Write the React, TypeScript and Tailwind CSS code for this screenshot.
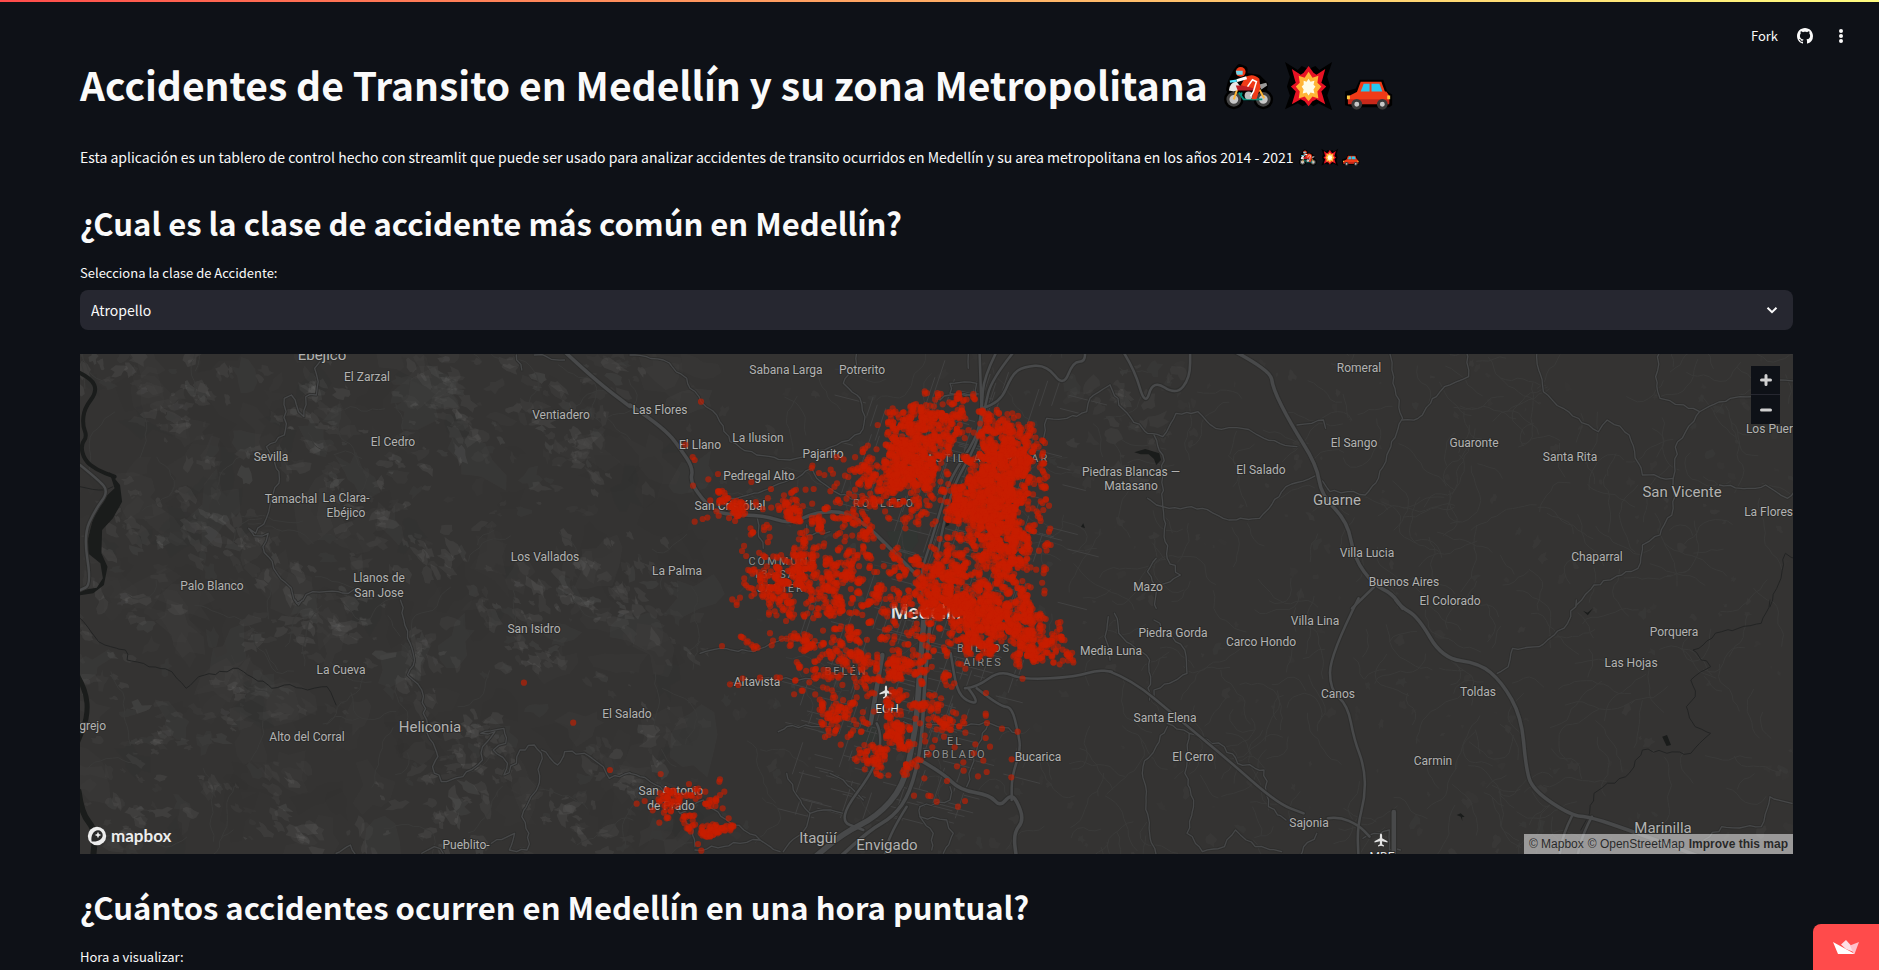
import { useId } from "react";

type Point = [number, number];
type Tile = { x: number; y: number; sx: number; sy: number };

const third = 1 / 3;
const TILES = {
  nw: { x: -10, y: -9, sx: 1 / 2.8, sy: third },
  sw: { x: -10, y: 246, sx: 1 / 2.8, sy: third },
  n: { x: 550, y: -9, sx: third, sy: third },
  s: { x: 550, y: 246, sx: third, sy: third },
  ne: { x: 1030, y: -9, sx: 0.44, sy: third },
  se: { x: 1030, y: 246, sx: 0.44, sy: third },
} satisfies Record<string, Tile>;
type TileName = keyof typeof TILES;

/** Seeded generator, so that the map draws the same on each render. */
function makeRandom(seed: number) {
  let state = seed;
  return () => {
    state = (state + 0x6d2b79f5) | 0;
    let t = Math.imul(state ^ (state >>> 15), 1 | state);
    t = (t + Math.imul(t ^ (t >>> 7), 61 | t)) ^ t;
    return ((t ^ (t >>> 14)) >>> 0) / 4294967296;
  };
}

function parse(tile: TileName, text: string): Point[] {
  const t = TILES[tile];
  return text.split(" ").map((pair) => {
    const [a, b] = pair.split(",").map(Number);
    return [t.x + a * t.sx, t.y + b * t.sy];
  });
}

function toPath(points: Point[], close = false) {
  const body = points.map(([x, y]) => `${x.toFixed(1)} ${y.toFixed(1)}`).join("L");
  return `M${body}${close ? "Z" : ""}`;
}

function smooth(points: Point[]) {
  let d = `M${points[0][0].toFixed(1)} ${points[0][1].toFixed(1)}`;
  for (let i = 1; i < points.length - 1; i++) {
    const [x, y] = points[i];
    const mx = (x + points[i + 1][0]) / 2;
    const my = (y + points[i + 1][1]) / 2;
    d += `Q${x.toFixed(1)} ${y.toFixed(1)} ${mx.toFixed(1)} ${my.toFixed(1)}`;
  }
  const last = points[points.length - 1];
  return `${d}L${last[0].toFixed(1)} ${last[1].toFixed(1)}`;
}

function wiggle(points: Point[], random: () => number) {
  const out: Point[] = [points[0]];
  for (let i = 1; i < points.length; i++) {
    const [ax, ay] = points[i - 1];
    const [bx, by] = points[i];
    const steps = Math.max(1, Math.round(Math.hypot(bx - ax, by - ay) / 6));
    for (let s = 1; s <= steps; s++) {
      const f = s / steps;
      const j = s === steps ? 0 : 3.4;
      out.push([ax + (bx - ax) * f + (random() - 0.5) * j, ay + (by - ay) * f + (random() - 0.5) * j]);
    }
  }
  return out;
}

const HIGHWAYS: [TileName, number, string][] = [
  ["nw", 3, "28,360 80,405 108,440 70,495 38,570 60,720 28,735"],
  ["nw", 4, "1385,20 1470,105 1568,185"],
  ["n", 4, "0,180 60,220 120,270 150,310 190,370 180,410 230,480 280,510 400,510 480,538 560,500 650,500 720,550 800,630 870,700"],
  ["n", 3, "1048,0 1052,130 1055,200 1040,280 960,400 930,500 900,600 870,690 880,800"],
  ["n", 3, "1110,0 1062,90 1055,190"],
  ["n", 3, "1160,10 1085,100 1064,190 1040,300 970,420 940,540 920,640"],
  ["n", 3, "1060,188 1110,175 1145,90 1180,65 1250,60 1300,125 1330,50 1365,50 1365,10"],
  ["ne", 3, "25,10 55,70 80,185 98,105 150,150 182,100 182,10"],
  ["ne", 4, "270,10 365,75 370,130 410,235 470,360 480,450 540,530 555,640 600,720 640,745 665,790"],
  ["se", 4, "650,0 660,20 700,50 755,175 840,190 890,245 935,350 945,500 960,570 1050,648 1090,650 1200,700 1350,775"],
  ["ne", 3, "600,726 550,790"],
  ["se", 3, "565,-5 500,165 500,270 540,315 555,420 578,500 580,590 562,680 565,780"],
  ["se", 3, "0,215 50,240 150,350 260,470 380,610 440,640"],
  ["se", 3, "495,655 520,650 565,675 590,710"],
  ["s", 3, "1005,265 1040,262 1110,210 1180,240 1340,230 1400,210 1445,215"],
  ["s", 6, "885,20 870,200 860,350 850,420 820,560 740,650 640,700 550,775"],
  ["s", 4, "905,20 885,220 875,440 840,580 790,650 720,690 620,780"],
  ["s", 5, "757,165 722,370"],
  ["s", 4, "870,480 940,520 990,570 1080,585 1110,620 1140,585 1160,600 1182,660 1150,700 1160,780"],
  ["s", 3, "1015,265 1050,310 1010,305 980,270 962,160"],
  ["s", 3, "1040,265 1110,320 1145,320 1165,400 1172,450 1145,530 1145,600"],
  ["s", 3, "740,370 756,400 740,500 620,660 700,690"],
  ["s", 3, "830,620 780,700 760,780"],
  ["se", 3, "1050,648 1030,700 1020,780"],
  ["se", 3, "1095,650 1075,700 1060,780"],
  ["se", 5, "645,636 645,762"],
];

const ROADS: [TileName, string][] = [
  ["nw", "700,50 685,70 695,110 690,150 660,155 655,215 640,200 620,150 600,160 605,200 600,270 550,305 585,380 585,415 570,440 550,520 520,565 500,550 515,572 555,565 540,605 570,670 620,730 635,775 680,740 780,745 800,730"],
  ["nw", "1250,30 1265,75"],
  ["nw", "1300,30 1385,45"],
  ["n", "0,30 100,45 170,100 180,130 213,170 260,210 300,290 380,330 480,345 545,320 620,300 690,265 705,215 690,160 640,115 680,60 680,20"],
  ["n", "545,370 500,400 420,430 300,460"],
  ["n", "545,370 560,400 600,430 660,460 700,480"],
  ["n", "380,510 385,560 400,610"],
  ["n", "530,540 530,570 600,560"],
  ["n", "930,165 960,150 1060,150"],
  ["n", "960,115 1040,115 1040,150 960,145 960,115"],
  ["n", "1015,27 1015,70"],
  ["n", "1240,300 1250,220 1310,220 1370,200 1380,160 1440,120"],
  ["ne", "0,120 20,180 85,265 120,275 150,205 200,200 240,250 300,250 350,280 425,305"],
  ["ne", "490,250 485,225 425,240"],
  ["ne", "635,20 650,150 665,220 640,290 610,400 580,450 540,440 500,440 475,400"],
  ["ne", "665,225 700,220 760,125 815,95 810,20"],
  ["ne", "970,20 985,140 1030,190 1110,260 1130,225 1180,270 1210,390 1280,400 1280,490 1250,570 1210,600 1200,670 1100,720 1060,780"],
  ["se", "1060,0 1040,70 975,140 915,145 905,200 880,220"],
  ["ne", "1250,20 1240,95 1250,160 1340,200 1410,160 1460,155"],
  ["ne", "1340,200 1290,290 1280,400"],
  ["ne", "1520,105 1555,108"],
  ["ne", "1385,420 1450,430 1490,420 1540,460 1555,440"],
  ["ne", "470,390 400,425 340,520 270,525 210,490 120,485 130,640 160,690 105,725 105,790"],
  ["ne", "85,460 120,485 120,330 100,270"],
  ["ne", "105,640 85,680 105,725"],
  ["se", "130,380 75,500 90,700 105,765"],
  ["se", "180,400 170,520 190,600 175,700 210,755 260,740 285,690 330,740 390,755"],
  ["se", "130,370 180,400 260,440 290,490 350,510 360,620 400,660"],
  ["se", "100,60 170,150 175,220 100,270 100,300"],
  ["se", "10,40 20,100 90,180 90,300"],
  ["se", "470,700 440,740 430,770"],
  ["se", "1550,610 1500,590 1480,680 1390,680 1350,720"],
  ["se", "575,715 600,700 635,690 635,750 660,750"],
  ["sw", "925,0 935,60 965,180 945,225 985,270 1000,400 1030,470 1015,500 1040,545 1100,530 1155,480 1155,440 1190,395 1150,400 1215,385 1220,430 1185,450 1225,490 1215,525 1250,490 1260,450 1300,435 1320,460 1310,560 1265,650 1285,700 1280,750 1230,750 1245,700 1180,730"],
  ["sw", "1320,450 1365,495 1385,455 1440,460 1480,490 1510,535 1568,518"],
  ["sw", "745,760 785,735 800,765"],
  ["sw", "985,760 1020,740 1045,760"],
  ["sw", "630,0 640,15 650,0"],
  ["s", "210,160 270,145 370,155 460,115 580,130"],
  ["s", "300,250 400,235 560,240"],
  ["s", "445,395 470,380 600,380"],
  ["s", "470,520 490,570 540,640 530,680 460,755"],
  ["s", "540,640 580,630 640,640"],
  ["s", "0,520 30,530 90,560 150,640 190,690 195,740"],
  ["s", "150,640 220,600 290,660 390,720 450,755"],
  ["s", "195,750 330,730 390,720"],
  ["s", "600,520 640,540 700,600"],
  ["s", "870,620 870,650 950,660 970,700 940,760"],
  ["s", "870,650 910,700 905,750"],
  ["s", "870,620 960,600 960,560"],
  ["s", "820,365 900,375 1080,370 1165,400"],
  ["s", "1075,370 1040,450 1010,560"],
  ["s", "1435,50 1425,110 1440,180"],
];

const STREAMS: [TileName, string][] = [
  ["sw", "28,55 80,125 155,150 160,180 285,215 325,265 360,230 470,205 565,265 600,255 665,270 720,260 745,315"],
  ["se", "1500,0 1480,70 1390,95 1325,150 1365,200 1320,240 1330,290 1310,320 1330,380 1365,400 1340,430 1320,460 1210,450 1180,520 1100,580 1090,640 1070,690"],
  ["ne", "1555,640 1535,625 1525,700 1500,785"],
  ["nw", "28,425 80,435 120,425"],
];

const RIVERS: [TileName, number, string][] = [
  ["nw", 4, "20,80 60,100 76,140 40,190 35,240 48,275 30,300 40,345 75,375 125,395"],
  ["sw", 5, "20,225 45,270 50,350 20,430"],
  ["sw", 6, "24,575 32,640 72,690 64,780"],
  ["n", 3, "1050,200 1055,260 1035,310 990,350"],
];

const WATER: [TileName, string][] = [
  ["nw", "110,380 140,420 146,470 120,520 90,555 88,625 105,665 95,720 65,745 20,752 20,738 75,728 92,700 85,655 50,625 48,590 65,520 100,455 125,430"],
  ["ne", "55,322 80,312 112,325 116,345 105,360 100,342 88,328 70,328"],
  ["se", "1075,32 1085,38 1098,25 1086,46"],
  ["se", "1255,410 1266,405 1275,435 1265,438"],
  ["se", "788,645 797,640 806,650 800,652 801,663 797,650"],
  ["n", "938,530 955,522 958,540 945,546"],
  ["n", "1353,545 1360,535 1365,550"],
];

const PARKS: [TileName, string][] = [
  ["n", "770,560 860,548 865,590 830,640 790,610"],
  ["s", "655,385 700,368 748,385 752,405 720,430 670,420"],
  ["n", "735,665 780,660 775,700 740,705"],
];

/** Accidents by 16 px cell: row, first column, and one digit a cell from 0 (empty) to 9 (solid). */
const DENSITY: [number, number, string][] = [
  [3, 16, "003353"],
  [4, 16, "578763641"],
  [5, 16, "6877527862"],
  [6, 14, "318976208985"],
  [7, 11, "112657994069894"],
  [8, 12, "10659882388975"],
  [9, 5, "400144132465444899973"],
  [10, 4, "1152245135422444999933"],
  [11, 7, "33024246202303689621"],
  [12, 7, "22053244120244688831"],
  [13, 7, "1357655444536657861"],
  [14, 7, "4577466424477846623"],
  [15, 6, "13663575364578877562"],
  [16, 8, "363455543478998882"],
  [17, 9, "101343233346998863"],
  [18, 7, "312444553335258746762"],
  [19, 10, "334663655324415645"],
  [20, 11, "44355744400002"],
  [21, 10, "11114141311"],
  [22, 12, "55216452"],
  [23, 12, "54306224301"],
  [24, 12, "332084111"],
  [25, 14, "55211"],
  [26, 14, "1415"],
];
const DENSITY_COUNTS = [0, 1, 2, 5, 9, 14, 24, 36, 50, 68];

const SINGLES: [TileName, string][] = [
  ["n", "213,170 743,240 166,299 188,336 194,345 264,387 235,403 189,422 364,411 194,530 218,522 266,512 545,369 567,384 583,390 602,374 609,386 621,415 645,392 660,376 655,396 1211,257 1243,354 1241,685 1240,495 1257,482 1257,560 1262,600 1232,528 423,432 320,772 330,758 551,432 788,190 790,202 850,188 862,185 875,186 888,180 900,182 912,184 938,178 958,172 965,178"],
  ["s", "276,138 320,15 300,253 338,235 325,255 390,233 440,232 450,233 495,242 497,241 515,272 518,272 538,247 556,236 579,262 606,271 883,535 951,543 852,587 895,587 902,588 920,605 1005,603 984,620 1145,478 1144,532 1163,395 1116,386 1068,279 1067,341 1071,369 1067,414 1080,440 1060,482 1070,516 1044,529 1003,370 1036,433 1032,460 1000,487 981,499 1001,512 974,442 942,410 915,420 907,442 896,463 884,407 855,483 870,370 895,357 920,388 1006,206 965,260 914,285 933,295 578,343 596,405 92,522 270,538 268,545 177,552 226,575 283,575 270,585 20,611 44,603 68,631 88,668 204,732 214,752 278,625 296,655 370,140 378,138 372,146 364,134 383,143 429,122 425,136 455,116 470,116 505,116"],
  ["sw", "1271,248 1409,368 1512,510"],
];

const CLUSTERS: [TileName, number, number, number, number, number][] = [
  ["s", 120, 595, 38, 28, 40],
  ["s", 190, 580, 25, 18, 10],
  ["s", 240, 605, 30, 16, 14],
  ["s", 115, 635, 14, 22, 7],
  ["s", 180, 670, 30, 28, 20],
  ["s", 240, 692, 30, 22, 40],
  ["s", 293, 685, 20, 14, 14],
  ["s", 528, 135, 22, 24, 22],
  ["s", 915, 322, 18, 12, 8],
  ["s", 960, 372, 34, 20, 16],
  ["s", 625, 340, 34, 26, 24],
  ["s", 795, 395, 28, 30, 26],
  ["s", 735, 465, 30, 34, 22],
  ["s", 805, 205, 38, 30, 34],
  ["s", 1215, 150, 50, 22, 20],
  ["n", 325, 490, 28, 24, 26],
  ["n", 273, 452, 14, 26, 12],
  ["n", 490, 505, 22, 22, 22],
  ["n", 555, 530, 22, 14, 14],
];

type Label = [string, number, number, number?, ("start" | "end")?];
const PLACES: Label[] = [
  ["Ebéjico", 242, 1, 15], ["El Zarzal", 287, 23], ["Sevilla", 191, 103], ["El Cedro", 313, 88],
  ["Ventiadero", 481, 61], ["Tamachal", 211, 145], ["La Clara-", 266, 144], ["Ebéjico", 266, 159],
  ["Los Vallados", 465, 203], ["Palo Blanco", 132, 232], ["Llanos de", 299, 224], ["San Jose", 299, 239],
  ["San Isidro", 454, 275], ["La Cueva", 261, 316], ["Alto del Corral", 227, 383], ["Heliconia", 350, 373, 15],
  ["grejo", 26, 372, 12, "end"], ["El Salado", 547, 360], ["Pueblito-", 386, 491], ["Sabana Larga", 706, 16],
  ["Potrerito", 782, 16], ["Las Flores", 580, 56], ["El Llano", 620, 91], ["La Ilusion", 678, 84],
  ["Pajarito", 743, 100], ["Pedregal Alto", 679, 122], ["San Cristóbal", 650, 152], ["La Palma", 597, 217],
  ["Altavista", 677, 328], ["San Antonio", 591, 437], ["de Prado", 591, 452], ["Itagüí", 738, 484, 15],
  ["Envigado", 807, 491, 15], ["Bucarica", 958, 403], ["Media Luna", 1031, 297], ["Piedras Blancas —", 1051, 118],
  ["Matasano", 1051, 132], ["El Salado", 1181, 116], ["Guarne", 1257, 146, 15], ["Romeral", 1279, 14],
  ["El Sango", 1274, 89], ["Guaronte", 1394, 89], ["Santa Rita", 1490, 103], ["San Vicente", 1602, 138, 15],
  ["Los Puer", 1713, 75, 12, "end"], ["La Flores", 1713, 158, 12, "end"], ["Villa Lucia", 1287, 199],
  ["Buenos Aires", 1324, 228], ["El Colorado", 1370, 247], ["Chaparral", 1517, 203], ["Mazo", 1068, 233],
  ["Villa Lina", 1235, 267], ["Piedra Gorda", 1093, 279], ["Carco Hondo", 1181, 288], ["Porquera", 1594, 278],
  ["Las Hojas", 1551, 309], ["Canos", 1258, 340], ["Toldas", 1398, 338], ["Santa Elena", 1085, 364],
  ["El Cerro", 1113, 403], ["Carmin", 1353, 407], ["Sajonia", 1229, 469], ["Marinilla", 1583, 474, 15],
];

const DISTRICTS: Label[] = [
  ["COMMUNE", 703, 207], ["13- SAN", 700, 220], ["JAVIER", 701, 234], ["ROBLEDO", 804, 149],
  ["CASTILLA", 870, 104], ["POPULAR", 938, 104], ["BUENOS", 904, 294], ["AIRES", 903, 308],
  ["BELÉN", 766, 317], ["EL", 875, 387], ["POBLADO", 875, 400],
];

function buildTerrain() {
  const random = makeRandom(11);
  const patches: { d: string; fill: string; o: number }[] = [];
  const blob = (x: number, y: number, size: number, angle: number, flat: number) => {
    const points: Point[] = [];
    for (let k = 0; k < 11; k++) {
      const a = (k / 11) * Math.PI * 2;
      const r = size * (0.35 + random() * 0.75);
      const px = Math.cos(a) * r;
      const py = Math.sin(a) * r * flat;
      points.push([x + px * Math.cos(angle) - py * Math.sin(angle), y + px * Math.sin(angle) + py * Math.cos(angle)]);
    }
    return toPath(points, true);
  };
  for (let i = 0; i < 220; i++) {
    const d = blob(random() * 620, random() * 500, 10 + random() * 34, random() * 3, 0.6);
    patches.push({ d, fill: random() < 0.4 ? "#000" : "#fff", o: 0.008 + random() * 0.014 });
  }
  for (let group = 0; group < 150; group++) {
    const gx = random() * 600;
    const gy = random() * 500;
    const lean = 0.5 + (random() - 0.5) * 1.6;
    for (let i = 0; i < 6; i++) {
      const d = blob(gx + (random() - 0.5) * 60, gy + (random() - 0.5) * 44, 3 + random() * 12, lean + (random() - 0.5) * 0.8, 0.55);
      patches.push({ d, fill: "#fff", o: 0.015 + random() * 0.045 });
    }
  }
  for (let i = 0; i < 360; i++) {
    const d = blob(600 + random() * 1113, random() * 500, 2 + random() * 7, random() * 3, 0.7);
    patches.push({ d, fill: "#fff", o: 0.008 + random() * 0.022 });
  }
  for (let i = 0; i < 40; i++) {
    const d = blob(985 + random() * 130, random() * 130, 3 + random() * 11, random() * 3, 0.7);
    patches.push({ d, fill: "#fff", o: 0.015 + random() * 0.03 });
  }
  return patches;
}

function buildTracks() {
  const random = makeRandom(29);
  let d = "";
  for (let i = 0; i < 420; i++) {
    const east = random() < 0.72;
    let x = east ? 960 + random() * 753 : random() * 960;
    let y = random() * 500;
    let a = random() * Math.PI * 2;
    const points: Point[] = [[x, y]];
    const steps = 4 + Math.floor(random() * 10);
    for (let s = 0; s < steps; s++) {
      a += (random() - 0.5) * 1.3;
      x += Math.cos(a) * 6;
      y += Math.sin(a) * 6;
      points.push([x, y]);
    }
    d += toPath(points);
  }
  return d;
}

function buildStreets() {
  const random = makeRandom(5);
  let d = "";
  for (let i = 0; i < 330; i++) {
    const y = 30 + random() * 440;
    const middle = y < 260 ? 870 : 830 - (y - 260) * 0.15;
    const x = middle + (random() + random() - 1) * 130;
    const along = random() < 0.5;
    const a = along ? -1.25 : 0.25;
    const l = 10 + random() * 30;
    d += toPath([[x, y], [x + Math.cos(a) * l, y + Math.sin(a) * l]]);
  }
  return d;
}

function buildAccidents() {
  const random = makeRandom(77);
  const out: Point[] = [];
  DENSITY.forEach(([r, first, digits]) => {
    digits.split("").forEach((digit, k) => {
      const count = DENSITY_COUNTS[Number(digit)];
      let x = 0;
      let y = 0;
      for (let i = 0; i < count; i++) {
        if (i === 0 || random() < 0.4) {
          x = 550 + (first + k + random()) * 16;
          y = -9 + (r + random()) * 16;
        } else {
          x += (random() - 0.5) * 6;
          y += (random() - 0.5) * 6;
        }
        out.push([x, y]);
      }
    });
  });
  CLUSTERS.forEach(([tile, cx, cy, rx, ry, count]) => {
    for (let i = 0; i < count; i++) {
      const a = random() * Math.PI * 2;
      const r = Math.sqrt(random());
      out.push(...parse(tile, `${cx + Math.cos(a) * r * rx},${cy + Math.sin(a) * r * ry}`));
    }
  });
  SINGLES.forEach(([tile, text]) => out.push(...parse(tile, text)));
  return out;
}

const roadRandom = makeRandom(3);
const TERRAIN = buildTerrain();
const TRACKS = buildTracks();
const STREETS = buildStreets();
const ACCIDENTS = buildAccidents();
const ROAD_PATHS = ROADS.map(([tile, text]) => toPath(wiggle(parse(tile, text), roadRandom)));
const STREAM_PATHS = STREAMS.map(([tile, text]) => toPath(wiggle(parse(tile, text), roadRandom)));

function Plane({ x, y }: { x: number; y: number }) {
  return (
    <path
      transform={`translate(${x} ${y})`}
      fill="#e4e4e4"
      d="M0-6.5C.8-6.5 1.1-5.4 1.1-4.4V-1.8L6.5 1.2V2.6L1.1 1.2V4.2L3 5.6V6.5L0 5.8-3 6.5V5.6L-1.1 4.2V1.2L-6.5 2.6V1.2L-1.1-1.8V-4.4C-1.1-5.4-.8-6.5 0-6.5Z"
    />
  );
}

function MapCanvas() {
  return (
    <svg
      viewBox="0 0 1713 500"
      preserveAspectRatio="xMidYMid slice"
      role="img"
      aria-label="Mapa de accidentes"
      className="block h-full w-full bg-[#343332] font-['Roboto',sans-serif]"
    >
      <rect width="1713" height="500" fill="#343332" />
      {TERRAIN.map((p, i) => (
        <path key={i} d={p.d} fill={p.fill} fillOpacity={p.o} />
      ))}
      {PARKS.map(([tile, text]) => (
        <path key={text} d={toPath(parse(tile, text), true)} fill="#313532" />
      ))}
      <g fill="none" strokeLinejoin="round" strokeLinecap="round">
        <path d={TRACKS} stroke="#3a3a39" strokeWidth="1" />
        <path d={STREETS} stroke="#424242" strokeWidth="1" />
        {RIVERS.map(([tile, width, text]) => (
          <path key={text} d={smooth(parse(tile, text))} stroke="#1a1c1b" strokeWidth={width} />
        ))}
        {WATER.map(([tile, text]) => (
          <path key={text} d={toPath(parse(tile, text), true)} fill="#1a1c1b" />
        ))}
        {STREAM_PATHS.map((d) => (
          <path key={d} d={d} stroke="#232424" strokeWidth="1" />
        ))}
        {ROAD_PATHS.map((d) => (
          <path key={d} d={d} stroke="#2e2e2d" strokeWidth="3" />
        ))}
        {ROAD_PATHS.map((d) => (
          <path key={d} d={d} stroke="#464748" strokeWidth="1.3" />
        ))}
        {HIGHWAYS.map(([tile, width, text]) => (
          <path key={text} d={smooth(parse(tile, text))} stroke="#2e2e2d" strokeWidth={width + 1.5} />
        ))}
        {HIGHWAYS.map(([tile, width, text]) => (
          <path key={text} d={smooth(parse(tile, text))} stroke="#48494a" strokeWidth={width - 0.5} />
        ))}
      </g>
      <g stroke="#2b2b2a" strokeWidth="2" strokeLinejoin="round" className="[paint-order:stroke]">
        {PLACES.map(([name, x, y, size = 12, anchor = "middle"]) => (
          <text key={`${name}${x}${y}`} x={x} y={y} fontSize={size} textAnchor={anchor} dominantBaseline="central" fill="#b2b2b1">
            {name}
          </text>
        ))}
        {DISTRICTS.map(([name, x, y]) => (
          <text key={`${name}${y}`} x={x} y={y} fontSize="11" textAnchor="middle" dominantBaseline="central" fill="#8d8e8e" className="tracking-[2px]">
            {name}
          </text>
        ))}
        <text x="849" y="258" fontSize="20" fontWeight="500" textAnchor="middle" dominantBaseline="central" fill="#e2e2e2">
          Medellín
        </text>
        <text x="807" y="355" fontSize="12" textAnchor="middle" dominantBaseline="central" fill="#e2e2e2">
          EOH
        </text>
        <text x="1302" y="503" fontSize="12" textAnchor="middle" dominantBaseline="central" fill="#e2e2e2">
          MDE
        </text>
      </g>
      <Plane x={806} y={338} />
      <Plane x={1301} y={486} />
      <g fill="#c81e00" fillOpacity="0.63">
        {ACCIDENTS.map(([x, y], i) => (
          <circle key={i} cx={x} cy={y} r="3.1" />
        ))}
      </g>
    </svg>
  );
}

const emojiClass = "inline-block h-[1.21em] w-[1.26em] overflow-visible align-[-0.23em]";

function MotorcycleEmoji() {
  return (
    <svg viewBox="0 0 50 48" className={`ml-[0.2em] ${emojiClass}`} role="img" aria-label="Motociclista">
      <g stroke="#000" strokeWidth="6" strokeLinejoin="round" fill="#000">
        <path d="M12 9l4-5 5 2v7l14 2 7 7-2 8-14 6-12-3-9-6 2-8Z" />
        <circle cx="10" cy="37" r="7" />
        <circle cx="40" cy="37" r="7" />
      </g>
      <circle cx="10" cy="37" r="6" fill="#c8c8c8" stroke="#424242" strokeWidth="3" />
      <circle cx="40" cy="37" r="6" fill="#c8c8c8" stroke="#424242" strokeWidth="3" />
      <path d="M14 25L10 37M36 27l5 9" stroke="#ffb636" strokeWidth="2" fill="none" />
      <path d="M15 30l5 7h19M18 30l-1 4" stroke="#00917d" strokeWidth="2" fill="none" />
      <circle cx="25" cy="33" r="4" fill="#bdbdbd" />
      <path d="M5 28q1-9 8-9l5 7-8 3Z" fill="#e8e8e8" />
      <path d="M35 22l8-2 1 3-6 4Z" fill="#9a9a9a" />
      <path d="M12 23h22v5H14Z" fill="#bb1d24" />
      <path d="M17 23l5-9q8-4 14 2l1 9-4 12h-5l3-11-8-2Z" fill="#f03a17" />
      <path d="M24 24l5-7 4 2-3 10-3 5" fill="none" stroke="#fff" strokeWidth="1.6" />
      <path d="M13 18l10-3" stroke="#fff" strokeWidth="3" />
      <path d="M6 19l7-1" stroke="#50e6ff" strokeWidth="2.4" />
      <circle cx="17" cy="9" r="5" fill="#f03a17" />
      <path d="M12 8h7v4h-6Z" fill="#6fd6e8" />
    </svg>
  );
}

function CollisionEmoji() {
  return (
    <svg viewBox="0 0 50 48" className={`ml-[0.05em] ${emojiClass}`} role="img" aria-label="Choque">
      <path d="M1-1l13 8 4-4 7 3 7-3 4 4 13-8-5 15 3 10-3 9 5 15-14-7-5 3-5-3-6 3-5-3L1 47l5-14-3-9 3-10Z" fill="#000" />
      <path d="M8 6l9 6 3-2 5-7 5 7 3 2 9-6-3 11-1 3 5 4-5 5 1 3 3 10-9-5-4 2-4 5-4-5-4-2-9 5 3-10 1-3-5-5 5-4-1-3Z" fill="#e81224" />
      <path d="M15 13l6 2 4-6 4 6 6-2-1 7 4 4-4 5 1 7-6-2-4 5-4-5-6 2 1-7-4-5 4-4Z" fill="#ffb636" />
      <path d="M20 18l3 1 2-3 2 3 4-1-1 4 2 2-2 3 1 4-4-1-2 3-2-3-4 1 1-4-2-3 2-2Z" fill="#fffde7" />
    </svg>
  );
}

function CarEmoji() {
  return (
    <svg viewBox="0 0 50 48" className={`ml-[0.05em] ${emojiClass}`} role="img" aria-label="Carro">
      <path d="M1 29l11-3 4-9h24l4 12 5 3v11l-3 2h-3q-4 5-9 0H18q-5 5-9 0L1 43Z" fill="#000" />
      <path d="M4 34l10-5h29l3 4v8H4Z" fill="#f03a17" />
      <path d="M4 37h42v5H4Z" fill="#c7281a" />
      <path d="M13 30l4-11h21l4 11Z" fill="#f03a17" />
      <path d="M17 29l3-8h6v8Z" fill="#28c8f0" />
      <path d="M28 21h8l3 8H28Z" fill="#28c8f0" />
      <path d="M3 33h3v4H3ZM44 33h3v4h-3Z" fill="#ffc83d" />
      <circle cx="13" cy="42" r="4" fill="#c8c8c8" stroke="#3a3a3a" strokeWidth="3" />
      <circle cx="39" cy="42" r="4" fill="#c8c8c8" stroke="#3a3a3a" strokeWidth="3" />
    </svg>
  );
}

function Emojis() {
  return (
    <>
      <MotorcycleEmoji /> <CollisionEmoji /> <CarEmoji />
    </>
  );
}

function Toolbar() {
  return (
    <header className="absolute top-3 right-6 z-10 flex h-12 items-center text-[13px]">
      <button type="button" className="px-2">Fork</button>
      <button type="button" aria-label="GitHub" className="pr-3.5 pl-[11px]">
        <svg viewBox="0 0 16 16" className="size-4" fill="currentColor">
          <path d="M8 0C3.58 0 0 3.58 0 8c0 3.54 2.29 6.53 5.47 7.59.4.07.55-.17.55-.38 0-.19-.01-.82-.01-1.49-2.01.37-2.53-.49-2.69-.94-.09-.23-.48-.94-.82-1.13-.28-.15-.68-.52-.01-.53.63-.01 1.08.58 1.23.82.72 1.21 1.87.87 2.33.66.07-.52.28-.87.51-1.07-1.78-.2-3.64-.89-3.64-3.95 0-.87.31-1.59.82-2.15-.08-.2-.36-1.02.08-2.12 0 0 .67-.21 2.2.82.64-.18 1.32-.27 2-.27s1.36.09 2 .27c1.53-1.04 2.2-.82 2.2-.82.44 1.1.16 1.92.08 2.12.51.56.82 1.27.82 2.15 0 3.07-1.87 3.75-3.65 3.95.29.25.54.73.54 1.48 0 1.07-.01 1.93-.01 2.2 0 .21.15.46.55.38A8.01 8.01 0 0 0 16 8c0-4.42-3.58-8-8-8Z" />
        </svg>
      </button>
      <button type="button" aria-label="Menú" className="px-1.5">
        <svg viewBox="0 0 16 16" className="size-4" fill="currentColor">
          <circle cx="8" cy="3" r="2" />
          <circle cx="8" cy="8" r="2" />
          <circle cx="8" cy="13" r="2" />
        </svg>
      </button>
    </header>
  );
}

function ZoomControls() {
  return (
    <div className="absolute top-3 right-[13px] flex w-[29px] flex-col divide-y divide-[#262730] bg-[#0e1117] text-[#d0d0d0]">
      {["Acercar", "Alejar"].map((name) => (
        <button key={name} type="button" aria-label={name} className="flex h-[29px] items-center justify-center">
          <svg viewBox="0 0 12 12" className="size-3" stroke="currentColor" strokeWidth="3" strokeLinecap="round">
            <path d={name === "Acercar" ? "M1.5 6h9M6 1.5v9" : "M1.5 6h9"} />
          </svg>
        </button>
      ))}
    </div>
  );
}

function MapboxLogo() {
  return (
    <a href="#mapbox" className="absolute bottom-2 left-[7px] flex items-center gap-1 text-[#ededed]">
      <svg viewBox="0 0 20 20" className="size-5">
        <circle cx="10" cy="10" r="9.2" fill="#ededed" />
        <path d="M4.6 15.4C3.6 9.600 6.500 4.300 11 4.300a4.700 4.700 0 0 1 4.700 4.700C15.700 13.500 10.400 16.400 4.600 15.400Z" fill="#2a2a2a" />
        <path d="M11 5.700l1 2.300 2.300 1-2.300 1-1 2.300-1-2.300-2.300-1 2.300-1Z" fill="#ededed" />
      </svg>
      <span className="font-['Lato',sans-serif] text-[17px] leading-5 font-bold">mapbox</span>
    </a>
  );
}

function AccidentMap() {
  return (
    <section aria-label="Mapa" className="relative mt-6 h-[500px] overflow-hidden">
      <MapCanvas />
      <ZoomControls />
      <MapboxLogo />
      <div className="absolute right-0 bottom-0 flex h-5 items-center gap-1 bg-white/50 px-[5px] font-['Liberation_Sans',sans-serif] text-xs text-black/75">
        <a href="#mapbox">© Mapbox</a>
        <a href="#osm">© OpenStreetMap</a>
        <a href="#improve" className="font-bold">Improve this map</a>
      </div>
    </section>
  );
}

function HostBadge() {
  return (
    <a href="#streamlit" aria-label="Streamlit" className="fixed right-0 bottom-0 flex h-[46px] w-[66px] items-center justify-center rounded-tl-lg bg-[#ff4b4b]">
      <svg viewBox="0 0 26 14" className="h-3.5 w-[26px]">
        <path d="M8 4.500L13 0l4.500 5L21 12 12.800 9Z" fill="#ffdfe6" />
        <path d="M17 5.500L26 2 21.500 14 20 12.200Z" fill="#ffc0ca" />
        <path d="M0 2L21 13.400 21.500 14H5Z" fill="#fff" />
      </svg>
    </a>
  );
}

const h2Class = "text-[31px] leading-[44px] font-bold";

export default function App() {
  const selectId = useId();
  return (
    <div className="relative h-screen overflow-hidden bg-[#0e1117] font-['Noto_Sans_CJK_SC',sans-serif] text-[#fafafa]">
      <div className="absolute inset-x-0 top-0 h-0.5 bg-linear-to-r from-[#ff4b4b] to-[#fffd80]" />
      <Toolbar />
      <main className="mr-[86px] ml-20 pt-14">
        <h1 className="text-[39px] leading-[56px] font-bold">
          Accidentes de Transito en Medellín y su zona Metropolitana <Emojis />
        </h1>
        <p className="mt-[33px] text-sm leading-6">
          Esta aplicación es un tablero de control hecho con streamlit que puede ser usado para analizar accidentes de
          transito ocurridos en Medellín y su area metropolitana en los años 2014 - 2021 <Emojis />
        </p>
        <h2 className={`mt-8 ${h2Class}`}>¿Cual es la clase de accidente más común en Medellín?</h2>
        <label htmlFor={selectId} className="mt-4 block text-[13px] leading-6">
          Selecciona la clase de Accidente:
        </label>
        <div className="relative mt-[5px]">
          <select id={selectId} defaultValue="Atropello" className="h-10 w-full appearance-none rounded-lg bg-[#262730] px-[11px] text-sm">
            <option>Atropello</option>
            <option>Choque</option>
            <option>Caída de ocupante</option>
            <option>Volcamiento</option>
          </select>
          <svg viewBox="0 0 12 12" className="pointer-events-none absolute top-3.5 right-[15px] size-3" fill="none" stroke="#fafafa" strokeWidth="2">
            <path d="M1.500 3.800L6 8.200l4.500-4.400" />
          </svg>
        </div>
        <AccidentMap />
        <h2 className={`mt-[31px] ${h2Class}`}>¿Cuántos accidentes ocurren en Medellín en una hora puntual?</h2>
        <p className="mt-4 text-[13px] leading-6">Hora a visualizar:</p>
      </main>
      <HostBadge />
    </div>
  );
}
